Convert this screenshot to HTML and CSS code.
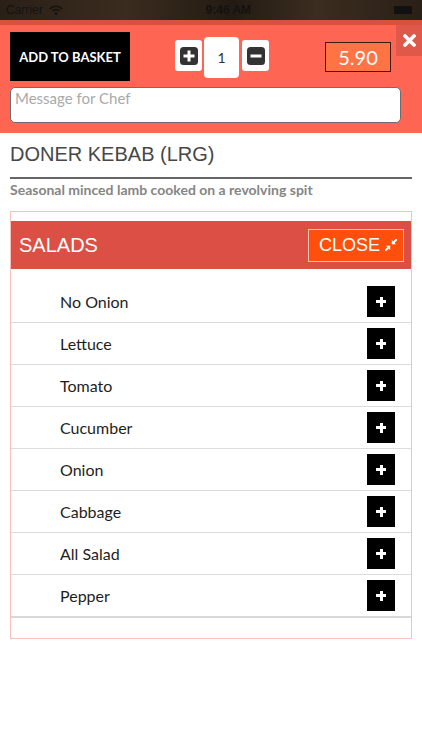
FILE: index.html
```html
<!DOCTYPE html>
<html>

<head>
	<title>Doner Kebab (LRG)</title>
	<link rel="stylesheet" href="styles.css">
</head>

<body>
	<div class="status-bar">
		<span class="carrier">Carrier
			<svg class="wifi" width="14" height="10" viewBox="0 0 14 10">
				<path d="M1 4 A8 8 0 0 1 13 4" fill="none" stroke="#111" stroke-width="1.6" />
				<path d="M3.5 6 A5 5 0 0 1 10.5 6" fill="none" stroke="#111" stroke-width="1.6" />
				<circle cx="7" cy="8.6" r="1.3" fill="#111" />
			</svg>
		</span>
		<span class="clock">9:46 AM</span>
		<span class="battery"></span>
	</div>

	<div class="order">
		<div class="order-row">
			<button type="button" class="add-basket">ADD TO BASKET</button>
			<div class="qty">
				<button type="button" class="qty-btn">
					<svg width="18" height="18" viewBox="0 0 18 18">
						<rect x="0" y="0" width="18" height="18" rx="3.5" fill="#333" />
						<rect x="7.5" y="3.5" width="3" height="11" fill="#fff" />
						<rect x="3.5" y="7.5" width="11" height="3" fill="#fff" />
					</svg>
				</button>
				<div class="qty-value">1</div>
				<button type="button" class="qty-btn">
					<svg width="18" height="18" viewBox="0 0 18 18">
						<rect x="0" y="0" width="18" height="18" rx="3.5" fill="#333" />
						<rect x="3.5" y="7.5" width="11" height="3" fill="#fff" />
					</svg>
				</button>
			</div>
			<div class="price">5.90</div>
		</div>
		<textarea class="chef-message" placeholder="Message for Chef"></textarea>
		<button type="button" class="dismiss">
			<svg width="13" height="13" viewBox="0 0 13 13">
				<path d="M2 2 L11 11 M11 2 L2 11" stroke="#fff" stroke-width="3.6" stroke-linecap="square" />
			</svg>
		</button>
	</div>

	<div class="item">
		<h1 class="item-title">DONER KEBAB (LRG)</h1>
		<p class="item-desc">Seasonal minced lamb cooked on a revolving spit</p>

		<div class="options">
			<div class="options-head">
				<span class="options-name">SALADS</span>
				<button type="button" class="options-close">CLOSE
					<svg width="12" height="12" viewBox="0 0 12 12">
						<path d="M12 0 L8.6 3.4 M0 12 L3.4 8.6" stroke="#fff" stroke-width="2" />
						<polygon points="6.8,5.2 6.8,1 11,5.2" fill="#fff" />
						<polygon points="5.2,6.8 1,6.8 5.2,11" fill="#fff" />
					</svg>
				</button>
			</div>
			<ul class="option-list">
				<li class="option">No Onion<button type="button" class="option-add"></button></li>
				<li class="option">Lettuce<button type="button" class="option-add"></button></li>
				<li class="option">Tomato<button type="button" class="option-add"></button></li>
				<li class="option">Cucumber<button type="button" class="option-add"></button></li>
				<li class="option">Onion<button type="button" class="option-add"></button></li>
				<li class="option">Cabbage<button type="button" class="option-add"></button></li>
				<li class="option">All Salad<button type="button" class="option-add"></button></li>
				<li class="option">Pepper<button type="button" class="option-add"></button></li>
			</ul>
		</div>
	</div>
</body>

</html>
```

FILE: styles.css
```css
body {
	margin: 0;
	font-family: Lato, "Liberation Sans", sans-serif;
	background: #fff;
}

button {
	font-family: inherit;
	cursor: pointer;
}

/* status bar, dimmed behind the modal */
.status-bar {
	height: 20px;
	display: flex;
	align-items: center;
	justify-content: space-between;
	padding: 0 10px 0 6px;
	background: linear-gradient(90deg, #2a2017, #3a2c1e 30%, #231b13 55%, #3b2d1f 75%, #2a2017);
	color: #141210;
	font-family: "Liberation Sans", sans-serif;
	font-size: 12px;
	font-weight: bold;
}

.carrier {
	display: flex;
	align-items: center;
	gap: 6px;
	font-weight: normal;
}

.battery {
	width: 18px;
	height: 8px;
	background: #111;
	border-radius: 1px;
}

/* order bar */
.order {
	position: relative;
	background: #fe6653;
	border-top: 5px solid #d9503f;
	padding: 7px 21px 10px 10px;
}

.order-row {
	display: flex;
	align-items: center;
	height: 49px;
}

.add-basket {
	width: 120px;
	height: 49px;
	border: none;
	background: #000;
	color: #fff;
	font-size: 13px;
	font-weight: bold;
	padding: 0;
}

.qty {
	display: flex;
	align-items: center;
	margin-left: 45px;
	margin-top: 2px;
}

.qty-btn {
	width: 27px;
	height: 31px;
	margin-top: -4px;
	border: none;
	border-radius: 3px;
	background: #fff;
	padding: 0;
	display: flex;
	align-items: center;
	justify-content: center;
}

.qty-value {
	width: 35px;
	height: 41px;
	margin: 0 3px 0 2px;
	background: #fff;
	border-radius: 4px;
	display: flex;
	align-items: center;
	justify-content: center;
	font-size: 14px;
	color: #333;
}

.price {
	width: 66px;
	height: 30px;
	margin-left: 56px;
	box-sizing: border-box;
	border: 1px solid #3a1c12;
	background: #ff7345;
	color: #fff;
	font-size: 20px;
	line-height: 28px;
	text-align: center;
}

.chef-message {
	display: block;
	width: 391px;
	height: 36px;
	margin-top: 6px;
	box-sizing: border-box;
	border: 1px solid #6d6d6d;
	border-radius: 5px;
	padding: 1px 4px;
	font-family: Lato, sans-serif;
	font-size: 15px;
	resize: none;
}

.chef-message::placeholder {
	color: #a9a9a9;
}

.dismiss {
	position: absolute;
	top: 0;
	right: 0;
	width: 26px;
	height: 31px;
	border: none;
	padding: 0;
	background: #e0584a;
	display: flex;
	align-items: center;
	justify-content: center;
}

/* item details */
.item {
	padding: 0 10px;
}

.item-title {
	margin: 10px 0 0;
	padding-bottom: 11px;
	border-bottom: 2px solid #666;
	font-family: "Liberation Sans", sans-serif;
	font-size: 20px;
	font-weight: normal;
	line-height: 23px;
	color: #474747;
}

.item-desc {
	margin: 2px 0 0;
	font-size: 14px;
	font-weight: bold;
	line-height: 17px;
	color: #858585;
}

.options {
	margin-top: 13px;
	border: 1px solid #f6c1b9;
	padding: 9px 0 20px;
}

.options-head {
	height: 48px;
	background: #dc4f45;
	display: flex;
	align-items: center;
	justify-content: space-between;
	padding: 0 7px 0 8px;
}

.options-name {
	font-family: "Liberation Sans", sans-serif;
	font-size: 20px;
	color: #fff;
}

.options-close {
	width: 96px;
	height: 33px;
	box-sizing: border-box;
	border: 1px solid #ffc2b2;
	background: #ff4f0c;
	color: #fff;
	font-family: "Liberation Sans", sans-serif;
	font-size: 18px;
	padding: 0 0 0 4px;
	display: flex;
	align-items: center;
	justify-content: center;
	gap: 5px;
}

.option-list {
	list-style: none;
	margin: 12px 0 0;
	padding: 0;
}

.option {
	height: 41px;
	border-bottom: 1px solid #dcdcdc;
	display: flex;
	align-items: center;
	justify-content: space-between;
	padding: 0 16px 0 49px;
	font-size: 16px;
	color: #1e1e1e;
}

.option:last-child {
	border-bottom: 2px solid #d8d8d8;
}

.option-add {
	position: relative;
	width: 28px;
	height: 31px;
	border: none;
	background: #000;
	padding: 0;
}

.option-add::before,
.option-add::after {
	content: "";
	position: absolute;
	left: 50%;
	top: 50%;
	background: #fff;
}

.option-add::before {
	width: 10px;
	height: 3px;
	margin: -1.5px 0 0 -5px;
}

.option-add::after {
	width: 3px;
	height: 10px;
	margin: -5px 0 0 -1.5px;
}
```
